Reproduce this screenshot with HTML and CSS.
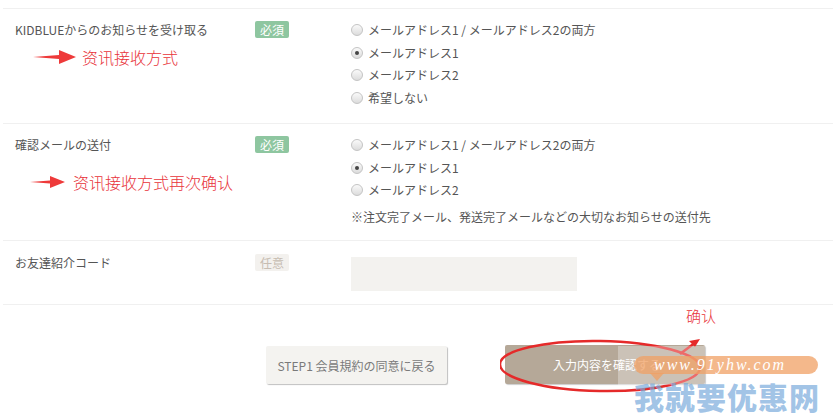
FILE: index.html
```html
<!DOCTYPE html>
<html lang="ja">
<head>
<meta charset="utf-8">
<title>Form</title>
<link rel="stylesheet" href="styles.css">
</head>
<body>
<div class="page">
  <div class="row r1">
    <div class="label">KIDBLUEからのお知らせを受け取る</div>
    <div class="req"><span class="badge must">必須</span></div>
    <div class="opts">
      <div class="opt"><span class="radio"></span>メールアドレス1 / メールアドレス2の両方</div>
      <div class="opt"><span class="radio on"></span>メールアドレス1</div>
      <div class="opt"><span class="radio"></span>メールアドレス2</div>
      <div class="opt"><span class="radio"></span>希望しない</div>
    </div>
  </div>
  <div class="row r2">
    <div class="label">確認メールの送付</div>
    <div class="req"><span class="badge must">必須</span></div>
    <div class="opts">
      <div class="opt"><span class="radio"></span>メールアドレス1 / メールアドレス2の両方</div>
      <div class="opt"><span class="radio on"></span>メールアドレス1</div>
      <div class="opt"><span class="radio"></span>メールアドレス2</div>
      <div class="note">※注文完了メール、発送完了メールなどの大切なお知らせの送付先</div>
    </div>
  </div>
  <div class="row r3">
    <div class="label">お友達紹介コード</div>
    <div class="req"><span class="badge opt-badge">任意</span></div>
    <div class="opts"><div class="input"></div></div>
  </div>
  <div class="actions">
    <div class="btn back">STEP1 会員規約の同意に戻る</div>
    <div class="btn next">入力内容を確認する</div>
  </div>

  <div class="anno a1">
    <svg class="arrow" width="44" height="16" viewBox="0 0 44 16"><path d="M0 8 L26 6 L26 1 L43 8 L26 15 L26 10 Z" fill="#ee3a3a"/></svg>
    <span class="anno-text">资讯接收方式</span>
  </div>
  <div class="anno a2">
    <svg class="arrow" width="36" height="14" viewBox="0 0 36 14"><path d="M0 7 L20 5.5 L20 1 L35 7 L20 13 L20 8.5 Z" fill="#ee3a3a"/></svg>
    <span class="anno-text">资讯接收方式再次确认</span>
  </div>
  <div class="anno a3"><span class="anno-text small">确认</span></div>
  <svg class="mark" width="240" height="110" viewBox="0 0 240 110">
    <ellipse cx="100" cy="54" rx="100" ry="25" fill="none" stroke="#e52a2a" stroke-width="2.5" transform="rotate(1 100 54)"/>
    <path d="M180 42 L196 30" stroke="#e52a2a" stroke-width="2.5"/>
    <path d="M200 27 L189 29 L195 35 Z" fill="#e52a2a"/>
  </svg>
  <div class="wm-veil"></div>
  <div class="wm-pill">www.91yhw.com</div>
  <div class="wm-tip"></div>
  <div class="wm-text">我就要优惠网</div>
</div>
</body>
</html>
```
FILE: styles.css
```css
* { box-sizing: border-box; }
html, body { margin: 0; padding: 0; background: #fff; }
body {
  font-family: "Noto Sans CJK JP", "Liberation Sans", sans-serif;
  font-size: 12px;
  color: #555;
}
.page {
  position: relative;
  width: 833px;
  height: 419px;
  padding-top: 8px;
  overflow: hidden;
}
.row {
  display: grid;
  grid-template-columns: 240px 96px 1fr;
  margin-left: 3px;
  border-top: 1px solid #f0f0f0;
  padding-left: 12px;
}
.r1 { padding-top: 10px; padding-bottom: 14px; height: 115px; }
.r2 { padding-top: 10px; padding-bottom: 12px; height: 117px; }
.r3 { padding-top: 11px; height: 65px; border-bottom: 1px solid #f0f0f0; }
.label { line-height: 22.5px; color: #555; }
.req { padding-top: 2px; }
.badge {
  display: inline-block;
  width: 34px;
  height: 17px;
  line-height: 17px;
  text-align: center;
  font-size: 12px;
  border-radius: 2px;
}
.must { background: #8ec6a0; color: #fff; }
.opt-badge { background: #f3f1ee; color: #c7bdb2; }
.opt {
  display: flex;
  align-items: center;
  height: 22.5px;
  line-height: 22.5px;
  white-space: nowrap;
  color: #555;
}
.radio {
  width: 12px;
  height: 12px;
  margin-right: 5px;
  border-radius: 50%;
  border: 1px solid #c4c4c4;
  background: linear-gradient(#fafafa, #dcdcdc);
  display: flex;
  align-items: center;
  justify-content: center;
}
.radio.on::after {
  content: "";
  width: 4px;
  height: 4px;
  border-radius: 50%;
  background: #444;
}
.note { margin-top: 4px; line-height: 22px; white-space: nowrap; color: #555; }
.input {
  margin-top: 5px;
  width: 226px;
  height: 34px;
  background: #f3f2ef;
}
.actions {
  display: flex;
  gap: 58px;
  padding-left: 266px;
  padding-top: 41px;
  align-items: flex-start;
}
.btn {
  display: flex;
  align-items: center;
  justify-content: center;
  font-size: 12px;
  border-radius: 2px;
}
.back {
  width: 181px;
  height: 38px;
  background: #f4f3f0;
  color: #7a7a7a;
  box-shadow: 1px 1px 1px rgba(0,0,0,0.25);
}
.next {
  width: 200px;
  height: 39px;
  margin-top: -1px;
  background: #b5a898;
  color: #fff;
  box-shadow: 1px 1px 1px rgba(0,0,0,0.2);
  padding-left: 4px;
}
.anno {
  position: absolute;
  display: flex;
  align-items: center;
  font-family: "Noto Sans CJK SC", sans-serif;
}
.anno-text { font-size: 16px; font-weight: 300; color: #e8333a; line-height: 20px; }
.anno-text.small { font-size: 15px; }
.a1 { left: 33px; top: 47px; gap: 5px; }
.a2 { left: 30px; top: 172px; gap: 7px; }
.a3 { left: 686px; top: 306px; }
.mark { position: absolute; left: 500px; top: 312px; }
.wm-veil {
  position: absolute;
  left: 618px; top: 346px;
  width: 87px; height: 39px;
  background: rgba(255,255,255,0.3);
}
.wm-pill {
  position: absolute;
  left: 634px; top: 356px;
  width: 184px; height: 18px;
  border-radius: 9px;
  background: rgba(240,160,100,0.75);
  color: #fff;
  font-family: "Liberation Serif", serif;
  font-style: italic;
  font-size: 16px;
  line-height: 18px;
  letter-spacing: 2px;
  padding-left: 20px;
}
.wm-tip {
  position: absolute;
  left: 650px; top: 373px;
  width: 0; height: 0;
  border-left: 7px solid transparent;
  border-right: 7px solid transparent;
  border-top: 8px solid rgba(240,160,100,0.75);
}
.wm-text {
  position: absolute;
  left: 634px; top: 380px;
  font-family: "Noto Sans CJK SC", sans-serif;
  font-weight: 900;
  font-size: 30px;
  line-height: 32px;
  letter-spacing: 1px;
  color: rgba(120,170,220,0.7);
}
```
